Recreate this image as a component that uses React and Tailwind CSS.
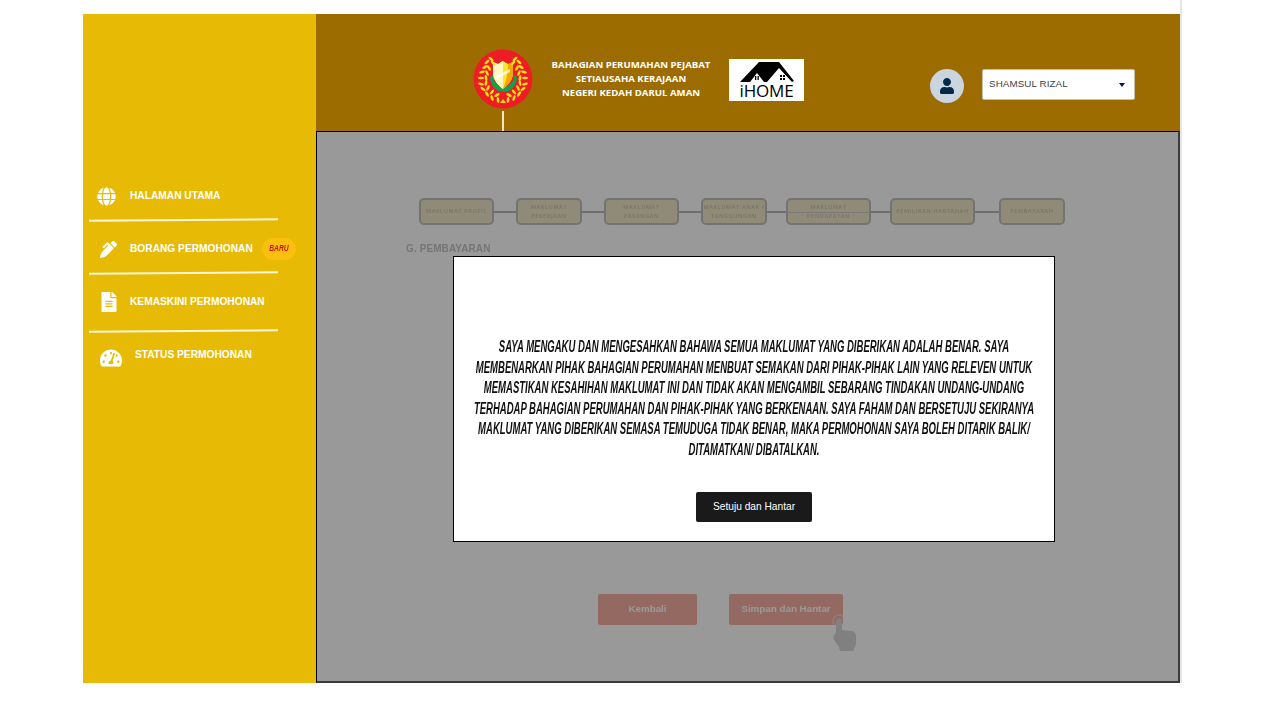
import React from 'react';
import { FaGlobe, FaPenAlt, FaFileAlt, FaTachometerAlt, FaUser } from 'react-icons/fa';

const steps = [
  { label: ['MAKLUMAT PROFIL'], width: 'w-[75px]' },
  { label: ['MAKLUMAT', 'PEKERJAAN'], width: 'w-[66px]' },
  { label: ['MAKLUMAT', 'PASANGAN'], width: 'w-[75px]' },
  { label: ['MAKLUMAT ANAK /', 'TANGGUNGAN'], width: 'w-[66px]' },
  { label: ['MAKLUMAT', 'PENDAPATAN'], width: 'w-[85px]', lineBehind: true },
  { label: ['PEMILIKAN HARTANAH'], width: 'w-[85px]' },
  { label: ['PEMBAYARAN'], width: 'w-[66px]' },
];

// connector widths between the step boxes
const connectors = ['w-[22px]', 'w-[22px]', 'w-[22px]', 'w-[19px]', 'w-[19px]', 'w-[24px]'];

const declaration = [
  'Saya mengaku dan mengesahkan bahawa semua maklumat yang diberikan adalah benar. Saya',
  'membenarkan pihak Bahagian Perumahan menbuat semakan dari pihak-pihak lain yang releven untuk',
  'memastikan kesahihan maklumat ini dan tidak akan mengambil sebarang tindakan undang-undang',
  'terhadap Bahagian Perumahan dan pihak-pihak yang berkenaan. Saya faham dan bersetuju sekiranya',
  'maklumat yang diberikan semasa temuduga tidak benar, maka permohonan saya boleh ditarik balik/',
  'ditamatkan/ dibatalkan.',
];

// leaf positions of the wreath: x, y, rotation (left side, mirrored for the right)
const leaves = [
  [18, 10, 40], [14, 13, -40], [20, 14, 50], [12, 18, -30], [16, 19, 55], [9, 23, -15], [14, 24, 65],
  [8, 29, 0], [13, 29, 80], [8, 35, 15], [13, 34, 100], [10, 40, 35], [15, 39, 115], [14, 45, 55],
  [19, 43, 130], [19, 49, 70], [24, 46, 150], [25, 51, 85],
];

const Crest = () => (
  <svg width="60" height="60" viewBox="0 0 60 60">
    <circle cx="30" cy="30" r="29.5" fill="#ee1c25" />
    <path d="M17 28a13.500 15 0 0 0 27 0l-3-2a10.500 12 0 0 1-21 0z" fill="#12a150" />
    <path d="M20 13l5 2 5-3 5 3 5-2 0 11c0 7-5 12-10 16-5-4-10-9-10-16z" fill="#fbe62e" />
    <path d="M20 13l5 2 5-3v28c-5-4-10-9-10-16z" fill="#fff8c0" />
    <path d="M35 15l5-2v11c0 7-5 12-10 16 3-8 5-15 5-25z" fill="#f5a800" />
    <path d="M23 27l14-7v3l-14 7z" fill="#fff" opacity="0.8" />
    {leaves.map(([x, y, r], i) => (
      <g key={i} fill="#fde30f">
        <ellipse cx={x} cy={y} rx="3" ry="1.300" transform={`rotate(${r} ${x} ${y})`} />
        <ellipse cx={60 - x} cy={y} rx="3" ry="1.300" transform={`rotate(${-r} ${60 - x} ${y})`} />
      </g>
    ))}
    <path d="M27 54l3-4 3 4z" fill="#fde30f" />
  </svg>
);

const HomeLogo = () => (
  <div className="flex h-[42px] w-[75px] flex-col items-center bg-white pt-[3px]">
    <svg width="54" height="22" viewBox="0 0 54 22">
      <path d="M0 20L19 0h20l15 19-2 1L39 6 27 20z" fill="#000" />
      <path d="M10 20l7-9 7 9z" fill="#fff" />
      <path d="M15 14h1.300v4H15zM17.500 14h1.300v4h-1.300z" fill="#000" />
      <path d="M40 13h2v2h-2zM43 13h2v2h-2zM40 16h2v2h-2zM43 16h2v2h-2z" fill="#000" />
    </svg>
    <span className="-mt-px font-['Open_Sans',sans-serif] text-[17px] font-medium leading-[16px] tracking-[-0.2px] text-black">iHOME</span>
  </div>
);

const NavItem = ({ icon, label, badge, indent }) => (
  <div className="flex h-[20px] items-center text-white">
    <div className="flex w-[35px] justify-center">{icon}</div>
    <span className={`ml-[6px] translate-y-[1px] font-['Liberation_Sans',sans-serif] text-[10.200px] font-bold whitespace-nowrap ${indent ? 'ml-[11px] -mt-[8px]' : ''}`}>{label}</span>
    {badge && (
      <span className="ml-[9px] flex h-[22px] w-[34px] translate-y-[1px] items-center justify-center rounded-full bg-[#fbbf0e]">
        <span className="inline-block scale-x-[0.75] font-['Liberation_Sans',sans-serif] text-[9px] font-bold italic text-[#d0140a]">{badge}</span>
      </span>
    )}
  </div>
);

const Divider = () => <div className="h-[2px] w-[189px] -rotate-[0.4deg] bg-[#fdf6d8]" />;

const Sidebar = () => (
  <aside className="flex w-[233px] shrink-0 flex-col bg-[#e7ba06] pl-[6px] pt-[171px]">
    <NavItem icon={<FaGlobe size={19} className="translate-y-[1px]" />} label="HALAMAN UTAMA" />
    <div className="mt-[14px]"><Divider /></div>
    <div className="mt-[17px]"><NavItem icon={<FaPenAlt size={17} className="translate-x-[2px] translate-y-[1px]" />} label="BORANG PERMOHONAN" badge="BARU" /></div>
    <div className="mt-[14px]"><Divider /></div>
    <div className="mt-[17px]"><NavItem icon={<FaFileAlt size={20} className="translate-x-[2px] translate-y-[1px]" />} label="KEMASKINI PERMOHONAN" /></div>
    <div className="mt-[19px]"><Divider /></div>
    <div className="mt-[16px]"><NavItem icon={<FaTachometerAlt size={22} className="translate-x-[4px]" />} label="STATUS PERMOHONAN" indent /></div>
  </aside>
);

const Header = () => (
  <header className="flex h-[117px] shrink-0 bg-[#9d6c00]">
    <div className="ml-[157px] flex w-[60px] flex-col items-center pt-[35px]">
      <Crest />
      <div className="mt-[2px] w-[1.500px] flex-1 bg-[#f3e6c0]" />
    </div>
    <div className="ml-[9px] w-[178px] pt-[44px] text-center font-['Open_Sans',sans-serif] text-[9.600px] font-bold leading-[14px] text-white">
      <p>BAHAGIAN PERUMAHAN PEJABAT</p>
      <p>SETIAUSAHA KERAJAAN</p>
      <p>NEGERI KEDAH DARUL AMAN</p>
    </div>
    <div className="ml-[9px] pt-[45px]"><HomeLogo /></div>
    <div className="ml-[126px] mt-[55px] flex h-[34px] w-[34px] items-center justify-center rounded-full bg-[#cbd5e0] text-[#03284a]">
      <FaUser size={16} />
    </div>
    <div className="ml-[18px] mt-[55px] flex h-[31px] w-[153px] items-center justify-between rounded-[2px] border border-[#c9bfa8] bg-white pl-[6px] pr-[9px] font-['Liberation_Sans',sans-serif] text-[9.800px] tracking-[0.1px] text-[#444]">
      <span>SHAMSUL RIZAL</span>
      <span className="h-0 w-0 border-x-[3.500px] border-t-[4px] border-x-transparent border-t-[#03184a]" />
    </div>
  </header>
);

const Stepper = () => (
  <div className="flex items-center pl-[102px]">
    {steps.map((step, idx) => (
      <React.Fragment key={idx}>
        {idx > 0 && <div className={`h-[2px] ${connectors[idx - 1]} bg-[#b8b8b8]`} />}
        <div className={`relative flex h-[27px] ${step.width} flex-col items-center justify-center rounded-[5px] border-2 border-[#c0c0c0] bg-[#efe8c8] text-center font-['Open_Sans',sans-serif] text-[5.500px] font-semibold leading-[9px] tracking-[0.65px] text-[#c6c2ae] whitespace-nowrap`}>
          {step.lineBehind && <div className="absolute inset-x-0 top-1/2 h-[1.500px] bg-[#c8c8c8]" />}
          {step.label.map((line) => <span key={line}>{line}</span>)}
        </div>
      </React.Fragment>
    ))}
  </div>
);

const PointerHand = () => (
  <svg className="absolute left-[234px] top-[20px]" width="26" height="38" viewBox="0 0 26 38">
    <circle cx="7" cy="7" r="6" fill="none" stroke="#fff" strokeOpacity="0.4" strokeWidth="1.400" />
    <path d="M4 7a3 3 0 0 1 6 0v9l9 1c3 0 5 2 5 5v8l-3 7H8l-1-4-5-7c-1-3 0-6 2-7z" fill="#d5d5d5" />
  </svg>
);

const Modal = () => (
  <div className="ml-[136px] mt-[124px] flex h-[286px] w-[602px] flex-col items-center overflow-hidden border border-black bg-white pt-[80px]">
    <p className="w-[1000px] shrink-0 scale-x-[0.595] text-center font-['Liberation_Sans',sans-serif] text-[16px] font-bold uppercase italic leading-[20.600px] text-[#111] whitespace-nowrap">
      {declaration.map((line) => <span key={line} className="block">{line}</span>)}
    </p>
    <button className="mt-[31px] h-[30px] w-[116px] shrink-0 rounded-[2px] bg-[#1a1a1a] font-['Liberation_Sans',sans-serif] text-[10.200px] text-white">
      Setuju dan Hantar
    </button>
  </div>
);

const Content = () => (
  <main className="relative flex-1 border border-b-2 border-r-2 border-black border-b-[#3a3a3a] border-r-[#3a3a3a] bg-white">
    <div className="flex h-full flex-col pt-[66px] blur-[0.4px]">
      <Stepper />
      <h2 className="ml-[89px] mt-[17px] font-['Liberation_Sans',sans-serif] text-[10px] font-bold leading-[14px] tracking-[0.1px] text-[#c4c4c4]">G. PEMBAYARAN</h2>
      <div className="relative ml-[281px] mt-[338px] flex gap-[32px]">
        <button className="h-[31px] w-[99px] rounded-[2px] bg-[#f5b0a3] font-['Liberation_Sans',sans-serif] text-[9.800px] font-bold text-white">Kembali</button>
        <button className="h-[31px] w-[114px] rounded-[2px] bg-[#f5b0a3] font-['Liberation_Sans',sans-serif] text-[9.800px] font-bold text-white">Simpan dan Hantar</button>
        <PointerHand />
      </div>
    </div>
    <div className="absolute inset-0 bg-black/40">
      <Modal />
    </div>
  </main>
);

export default function App() {
  return (
    <div className="h-[720px] w-[1280px] overflow-hidden bg-white">
      <div className="h-[683px] w-[1182px] border-r-2 border-[#e6e6e6] pl-[83px] pt-[14px]">
        <div className="flex h-[669px] w-[1097px]">
          <Sidebar />
          <div className="flex min-w-0 flex-1 flex-col">
            <Header />
            <Content />
          </div>
        </div>
      </div>
    </div>
  );
}
